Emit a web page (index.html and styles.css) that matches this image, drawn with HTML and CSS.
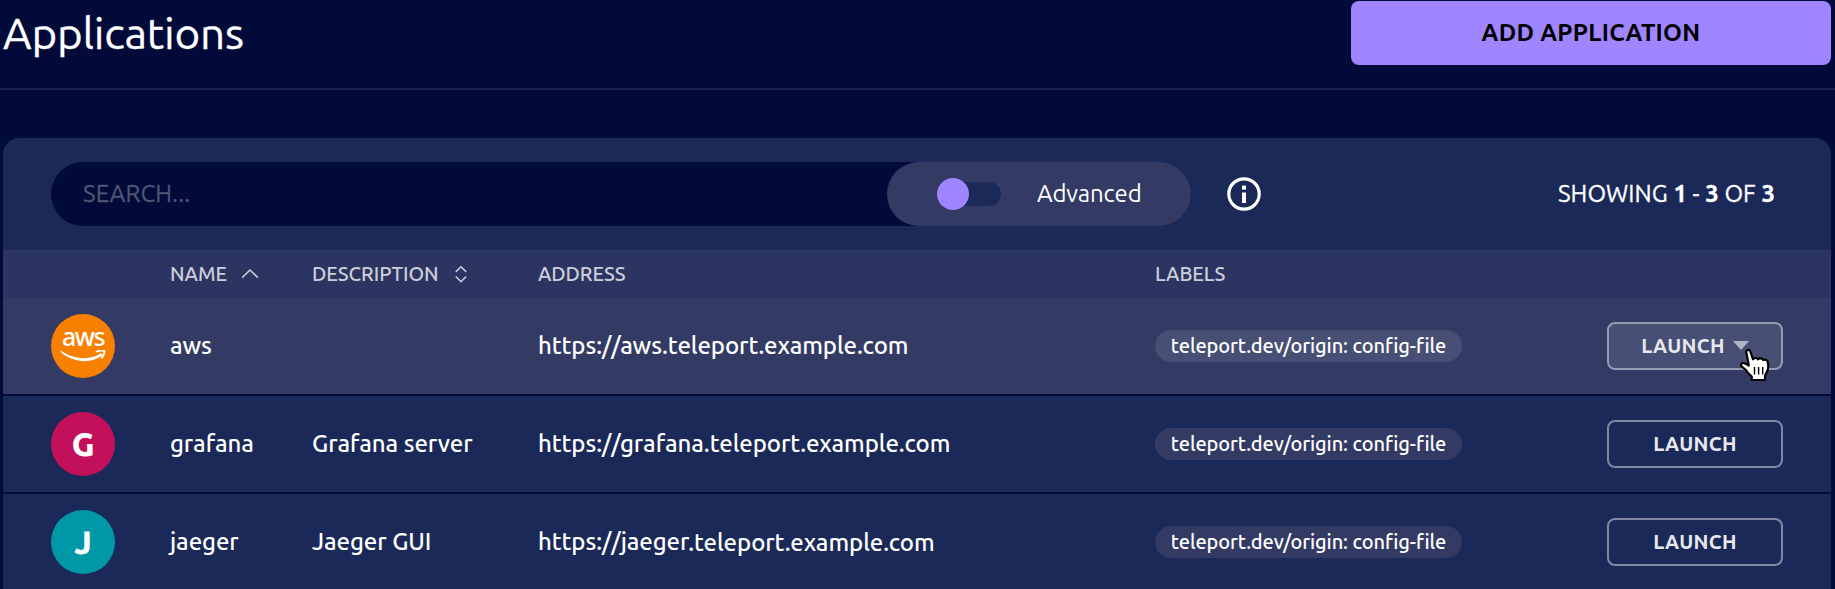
FILE: index.html
```html
<!DOCTYPE html>
<html lang="en">
<head>
<meta charset="utf-8">
<title>Applications</title>
<link rel="stylesheet" href="styles.css">
</head>
<body>
<header class="page-header">
  <h1 class="page-title">Applications</h1>
  <button class="add-button">ADD APPLICATION</button>
</header>
<main class="card">
  <div class="toolbar">
    <div class="search">
      <span class="placeholder">SEARCH...</span>
      <div class="advanced">
        <span class="toggle"><span class="knob"></span></span>
        <span class="advanced-label">Advanced</span>
      </div>
    </div>
    <svg class="info" width="34" height="34" viewBox="0 0 34 34">
      <circle cx="17" cy="17" r="15.2" fill="none" stroke="#fff" stroke-width="3.2"/>
      <rect x="15" y="8.6" width="4" height="4" fill="#fff"/>
      <rect x="15" y="15.5" width="4" height="10.5" fill="#fff"/>
    </svg>
    <span class="showing">SHOWING <b>1</b> - <b>3</b> OF <b>3</b></span>
  </div>
  <div class="row head">
    <span></span>
    <span class="sortable">NAME
      <svg class="sort-up" width="18" height="11" viewBox="0 0 18 11"><path d="M1.2 9.6 9 2 16.8 9.6" fill="none" stroke="currentColor" stroke-width="1.5"/></svg>
    </span>
    <span class="sortable">DESCRIPTION
      <svg class="sort-both" width="14" height="18" viewBox="0 0 14 18"><path d="M1.8 6.9 7 1.7l5.200 5.200M1.800 11.500 7 16.700l5.200-5.200" fill="none" stroke="currentColor" stroke-width="1.5"/></svg>
    </span>
    <span class="spaced">ADDRESS</span>
    <span class="spaced">LABELS</span>
    <span></span>
  </div>
  <div class="row item hovered">
    <span class="avatar aws"><span class="aws-text">aws</span>
      <svg class="smile" width="46" height="12" viewBox="0 0 46 12"><path d="M1.300 .8C13 9.600 30 10.400 40.500 3.600 42 2.800 43.200 4.600 41.800 5.800 31 14.200 12 12.600 .8 2 0.200 1.200 .6 .3 1.300 .8Z" fill="#fff"/><path d="M36 2C38.500 .5 43 0 44.300 1.100 44.800 2.800 43.600 6 41.400 8.400" fill="none" stroke="#fff" stroke-width="1.900"/></svg>
    </span>
    <span class="text">aws</span>
    <span class="text"></span>
    <span class="text">https://aws.teleport.example.com</span>
    <span class="label">teleport.dev/origin: config-file</span>
    <button class="launch">LAUNCH <svg class="caret" width="16" height="9" viewBox="0 0 16 9"><path d="M0 0h16L8 9z" fill="currentColor"/></svg>
      <svg class="cursor" width="34" height="38" viewBox="0 0 34 38">
        <path d="M7.200 4.800C7.500 2.400 10.600 2.400 11.300 4.500L14 12.300C15.600 10.500 18.300 10.700 19 12.300 20.500 10.800 23.300 11.100 24.200 12.900 25.700 12.200 28 12.800 28.700 14.500L29.300 19.500C29.600 23.500 26.800 26 26 29V33H12.800V29.500L9 26 7 23 2.800 19.700C.8 17.300 3.500 14.800 6 16.500L9.800 18.500Z" fill="#fff" stroke="#000" stroke-width="2.200" stroke-linejoin="round"/>
        <path d="M15.500 20v7.500M19.600 20v7.500M23.700 20v7.500" stroke="#000" stroke-width="1.400"/>
      </svg>
    </button>
  </div>
  <div class="row item">
    <span class="avatar grafana">G</span>
    <span class="text">grafana</span>
    <span class="text">Grafana server</span>
    <span class="text">https://grafana.teleport.example.com</span>
    <span class="label">teleport.dev/origin: config-file</span>
    <button class="launch">LAUNCH</button>
  </div>
  <div class="row item">
    <span class="avatar jaeger">J</span>
    <span class="text">jaeger</span>
    <span class="text">Jaeger GUI</span>
    <span class="text">https://jaeger<span class="domain">.teleport.example.com</span></span>
    <span class="label">teleport.dev/origin: config-file</span>
    <button class="launch">LAUNCH</button>
  </div>
</main>
</body>
</html>
```
FILE: styles.css
```css
* { box-sizing: border-box; }
body {
  margin: 0;
  height: 589px;
  overflow: hidden;
  background: #010a38;
  color: #fff;
  font-family: Ubuntu, "Noto Sans", sans-serif;
  font-size: 24px;
}
button { font-family: inherit; margin: 0; padding: 0; }
.page-header {
  height: 90px;
  padding: 1px 4px 0 3px;
  display: flex;
  justify-content: space-between;
  align-items: flex-start;
  border-bottom: 2px solid #1a2349;
}
.page-title { margin: 6px 0 0; font-size: 44px; line-height: 52px; font-weight: 400; letter-spacing: -0.2px; -webkit-text-stroke: 0.3px #fff; }
.add-button {
  width: 480px;
  height: 64px;
  border: 0;
  border-radius: 8px;
  background: #9f85ff;
  color: #000;
  font-size: 24px;
  font-weight: 700;
  letter-spacing: 0.28px;
  padding-bottom: 1px;
}
.card {
  margin: 48px 4px 0 3px;
  height: 460px;
  background: #1b2958;
  border-radius: 16px 16px 0 0;
  overflow: hidden;
}
.toolbar { height: 112px; padding: 0 56px 0 48px; display: flex; align-items: center; }
.search {
  width: 1140px;
  height: 64px;
  border-radius: 32px;
  background: #010a38;
  padding-left: 32px;
  display: flex;
  align-items: center;
  justify-content: space-between;
}
.placeholder { color: #4f5473; letter-spacing: 0.15px; padding-bottom: 2px; -webkit-text-stroke: 0.3px #4f5473; }
.advanced {
  width: 304px;
  height: 64px;
  border-radius: 32px;
  background: #333b65;
  padding-left: 50px;
  display: flex;
  align-items: center;
}
.toggle { width: 64px; height: 24px; border-radius: 12px; background: #1b2958; display: flex; align-items: center; }
.knob { width: 32px; height: 32px; border-radius: 50%; background: #9f85ff; }
.advanced-label { margin-left: 36px; letter-spacing: -0.15px; padding-bottom: 2px; }
.info { margin-left: 36px; }
.showing { margin-left: auto; letter-spacing: 0.08px; padding-bottom: 2px; -webkit-text-stroke: 0.3px #fff; }
.row {
  display: grid;
  grid-template-columns: 119px 142px 226px 617px 452px 176px;
  padding-left: 48px;
  align-items: center;
}
.head { height: 48px; background: #2c3561; color: #cdcfdb; font-size: 20px; font-weight: 500; padding-bottom: 1px; }
.spaced { letter-spacing: -0.1px; }
.sortable { display: flex; align-items: center; letter-spacing: -0.05px; }
.sort-up { margin-left: 14px; }
.sort-both { margin-left: 16px; }
.item { height: 98px; border-bottom: 2px solid #010a38; }
.hovered { background: #333b65; }
.avatar {
  width: 64px;
  height: 64px;
  border-radius: 50%;
  display: flex;
  align-items: center;
  justify-content: center;
  font-size: 32px;
  font-weight: 700;
  -webkit-text-stroke: 0.8px #fff;
}
.aws { background: #f88000; flex-direction: column; -webkit-text-stroke: 0; }
.aws-text { font: 500 25px/26px "Noto Sans", sans-serif; height: 26px; letter-spacing: -1.5px; margin-top: -7px; }
.smile { margin-top: 1px; }
.grafana { background: #c2105b; }
.jaeger { background: #0097a7; }
.text { font-weight: 500; letter-spacing: -0.08px; white-space: nowrap; padding-bottom: 2px; }
.domain { position: relative; top: 1px; }
.label {
  justify-self: start;
  width: 307px;
  height: 32px;
  line-height: 32px;
  border-radius: 16px;
  background: #333b65;
  text-align: center;
  font-size: 20px;
  font-weight: 500;
  letter-spacing: -0.09px;
  white-space: nowrap;
}
.hovered .label, .hovered .launch { background: #474f74; }
.launch {
  position: relative;
  height: 48px;
  border: 2px solid #8087a1;
  border-radius: 8px;
  background: transparent;
  color: #e8e9ee;
  font-size: 20px;
  font-weight: 700;
  letter-spacing: 0.35px;
  display: flex;
  align-items: center;
  justify-content: center;
  padding-bottom: 2px;
}
.hovered .launch { border-color: #979cb2; }
.caret { margin-left: 8px; color: #b1b5c6; }
.cursor { position: absolute; left: 130px; top: 23px; }
```
